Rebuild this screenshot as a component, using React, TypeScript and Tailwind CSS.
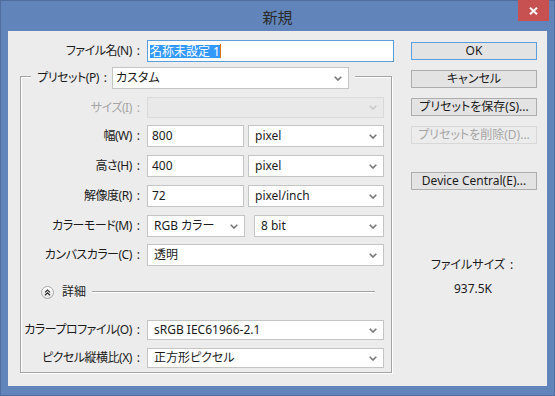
import React from "react";

const FONT = "font-['Noto_Sans','Noto_Sans_CJK_JP',sans-serif] [font-feature-settings:'palt']";

function Chevron({ disabled }: { disabled?: boolean }) {
  return (
    <svg width="8" height="5" viewBox="0 0 8 5" className="shrink-0">
      <path
        d="M0.7 0.7 L4 4 L7.3 0.7"
        fill="none"
        stroke={disabled ? "#c9c9c9" : "#767676"}
        strokeWidth="1.6"
      />
    </svg>
  );
}

function Select({
  value,
  className,
  disabled,
}: {
  value?: string;
  className: string;
  disabled?: boolean;
}) {
  return (
    <div
      className={`flex items-center justify-between pl-[6px] pr-[6px] border ${
        disabled ? "bg-[#e9e9e9] border-[#dadada]" : "bg-white border-[#c4c4c4]"
      } ${className}`}
    >
      <span className="whitespace-nowrap">{value}</span>
      <Chevron disabled={disabled} />
    </div>
  );
}

function Field({ value, className }: { value: string; className: string }) {
  return (
    <div className={`flex items-center pl-[4px] bg-white border border-[#c4c4c4] ${className}`}>
      {value}
    </div>
  );
}

// label with a spaced colon, squeezed a little like Meiryo UI
function Label({ text, className }: { text: string; className: string }) {
  return (
    <div className={`flex justify-end whitespace-nowrap ${className}`}>
      <span className="tracking-[-0.5px]">{text}</span>
      <span className="ml-[5px] mr-[1px]">:</span>
    </div>
  );
}

function Row({
  label,
  disabled,
  className,
  children,
}: {
  label: string;
  disabled?: boolean;
  className: string;
  children: React.ReactNode;
}) {
  return (
    <div className={`flex items-center ${className}`}>
      <Label text={label} className={`w-[120px] ${disabled ? "text-[#a6a6a6]" : ""}`} />
      <div className="ml-[6px] flex items-center">{children}</div>
    </div>
  );
}

function Button({
  label,
  className,
  primary,
  disabled,
}: {
  label: string;
  className: string;
  primary?: boolean;
  disabled?: boolean;
}) {
  return (
    <div
      className={`h-[18px] flex items-center justify-center border whitespace-nowrap ${
        primary
          ? "border-[#5b9ee0] bg-[#e3e3e3]"
          : disabled
          ? "border-[#d8d8d8] bg-[#ececec] text-[#a6a6a6]"
          : "border-[#adadad] bg-[#e3e3e3]"
      } ${className}`}
    >
      {label}
    </div>
  );
}

export default function App() {
  return (
    <div
      className={`w-[555px] h-[396px] bg-[#6185bb] shadow-[inset_0_0_0_1px_#4f6e9e] flex flex-col ${FONT} text-[12px] leading-[16px] text-[#1b1b1b]`}
    >
      {/* title bar */}
      <div className="relative h-[31px] flex items-center justify-center">
        <span className="text-[15px] text-[#2a2a2a] pt-[3px]">新規</span>
        <div className="absolute right-[6px] top-0 w-[31px] h-[21px] bg-[#c75050] flex items-center justify-center">
          <svg width="9" height="8" viewBox="0 0 9 8">
            <path d="M1 0.8 L8 7.2 M8 0.8 L1 7.2" stroke="#fff" strokeWidth="2" />
          </svg>
        </div>
      </div>

      {/* client */}
      <div className="ml-[8px] w-[539px] h-[355px] bg-[#ececec] flex">
        <div className="w-[387px] flex flex-col pt-[9px]">
          <div className="flex items-center h-[22px]">
            <Label text="ファイル名(N)" className="w-[133px]" />
            <div className="ml-[6px] w-[247px] h-[22px] border border-[#5b9ee0] bg-white flex items-center pl-[2px]">
              <span className="bg-[#3399ff] text-white leading-[13px] h-[13px] inline-flex items-center whitespace-nowrap">
                名称未設定 1
              </span>
              <span className="w-[1px] h-[14px] bg-[#e07a10]" />
            </div>
          </div>

          <fieldset className="mt-[1px] ml-[12px] w-[372px] border border-[#a3a3a3] shadow-[1px_1px_0_#ffffff,inset_1px_1px_0_#ffffff] pr-[7px] pb-[4px] min-w-0">
            <legend className="ml-[10px] pl-[11px] pr-[6px] pt-[4px] bg-[#ececec]">
              <div className="flex items-center">
                <Label text="プリセット(P)" className="w-[66px]" />
                <Select value="カスタム" className="ml-[4px] w-[237px] h-[22px] !pl-[3px]" />
              </div>
            </legend>

            <Row label="サイズ(I)" disabled className="mt-[8px]">
              <Select className="w-[237px] h-[21px]" disabled />
            </Row>
            <Row label="幅(W)" className="mt-[7px]">
              <Field value="800" className="w-[97px] h-[22px]" />
              <Select value="pixel" className="ml-[4px] w-[136px] h-[22px]" />
            </Row>
            <Row label="高さ(H)" className="mt-[8px]">
              <Field value="400" className="w-[97px] h-[22px]" />
              <Select value="pixel" className="ml-[4px] w-[136px] h-[22px]" />
            </Row>
            <Row label="解像度(R)" className="mt-[8px]">
              <Field value="72" className="w-[97px] h-[22px]" />
              <Select value="pixel/inch" className="ml-[4px] w-[136px] h-[22px]" />
            </Row>
            <Row label="カラーモード(M)" className="mt-[8px]">
              <Select value="RGB カラー" className="w-[98px] h-[22px]" />
              <Select value="8 bit" className="ml-[9px] w-[130px] h-[22px]" />
            </Row>
            <Row label="カンバスカラー(C)" className="mt-[7px]">
              <Select value="透明" className="w-[237px] h-[22px]" />
            </Row>

            <div className="mt-[18px] h-[16px] flex items-center pl-[20px]">
              <svg width="13" height="13" viewBox="0 0 13 13" className="shrink-0">
                <defs>
                  <linearGradient id="g" x1="0" y1="0" x2="0" y2="1">
                    <stop offset="0" stopColor="#ffffff" />
                    <stop offset="1" stopColor="#e4e4e4" />
                  </linearGradient>
                </defs>
                <circle cx="6.5" cy="6.5" r="6" fill="url(#g)" stroke="#a9a9a9" />
                <path
                  d="M4 6.4 L6.5 4 L9 6.4 M4 9.2 L6.5 6.8 L9 9.2"
                  fill="none"
                  stroke="#2a2a2a"
                  strokeWidth="1.2"
                />
              </svg>
              <span className="ml-[8px] whitespace-nowrap">詳細</span>
              <div className="flex-1 ml-[6px] mr-[9px] h-[2px] border-t border-[#a3a3a3] border-b border-b-white" />
            </div>

            <Row label="カラープロファイル(O)" className="mt-[20px]">
              <Select value="sRGB IEC61966-2.1" className="w-[237px] h-[20px]" />
            </Row>
            <Row label="ピクセル縦横比(X)" className="mt-[8px]">
              <Select value="正方形ピクセル" className="w-[237px] h-[20px]" />
            </Row>
          </fieldset>
        </div>

        <div className="ml-[16px] w-[126px] flex flex-col pt-[11px]">
          <Button label="OK" primary className="" />
          <Button label="キャンセル" className="mt-[10px]" />
          <Button label="プリセットを保存(S)..." className="mt-[10px]" />
          <Button label="プリセットを削除(D)..." disabled className="mt-[10px]" />
          <Button label="Device Central(E)..." className="mt-[28px]" />
          <div className="mt-[67px] text-center whitespace-nowrap pr-[4px]">
            ファイルサイズ<span className="ml-[5px]">:</span>
          </div>
          <div className="mt-[8px] text-center pr-[2px]">937.5K</div>
        </div>
      </div>
    </div>
  );
}
